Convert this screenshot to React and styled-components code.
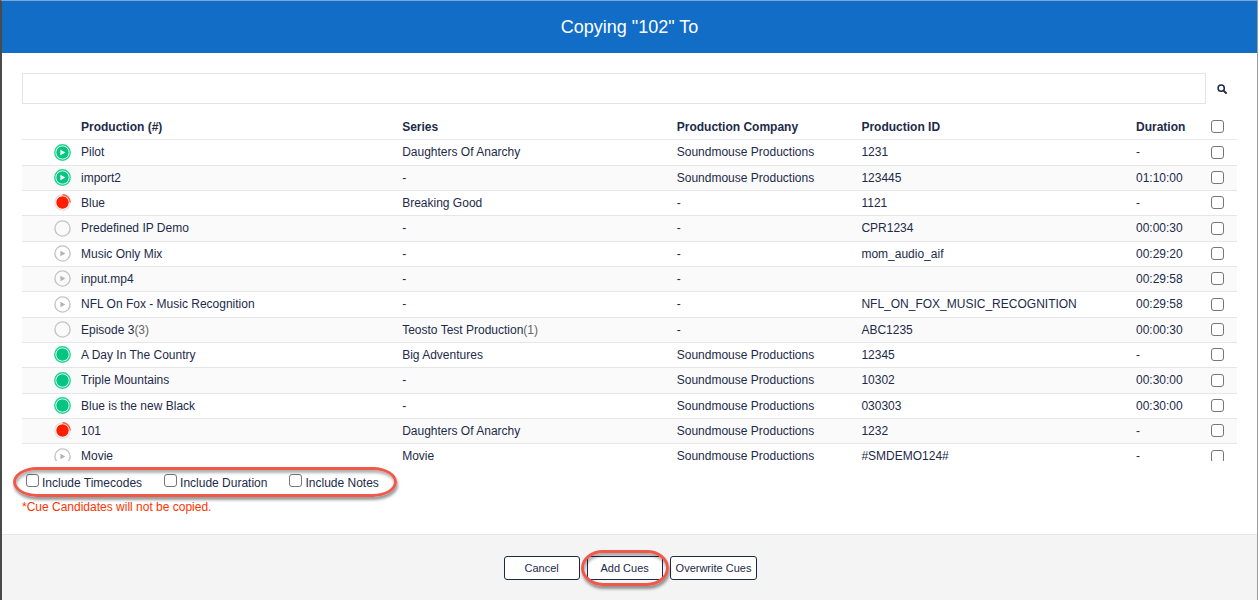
import React from "react";
import styled, { createGlobalStyle, css } from "styled-components";

const navy = "#1d2a4a";

const GlobalStyle = createGlobalStyle`
  *, *::before, *::after { box-sizing: border-box; }
  body {
    margin: 0;
    background: #fff;
    color: ${navy};
    font-family: "Liberation Sans", Arial, Helvetica, sans-serif;
    font-size: 12px;
    line-height: 16px;
  }
`;

const Dialog = styled.main`
  margin-right: 2px;
  border-top: 1px solid #7fa6d3;
  border-left: 2px solid #4a4a4a;
  border-right: 1px solid #a09c9e;
  background: #fff;
`;

const TitleBar = styled.header`
  height: 52px;
  display: flex;
  align-items: center;
  justify-content: center;
  background: #116dc5;
  color: #fff;
`;

const Title = styled.h1`
  margin: 0;
  font-size: 18px;
  line-height: 24px;
  font-weight: 400;
`;

const Body = styled.section`
  padding: 20px 20px 19px;
`;

const SearchRow = styled.form`
  display: flex;
  align-items: center;
  gap: 8px;
`;

const SearchInput = styled.input`
  flex: 1;
  min-width: 0;
  height: 31px;
  padding: 0 8px;
  border: 1px solid #e4e4e4;
  border-radius: 0;
  font: inherit;
  color: inherit;
`;

const SearchButton = styled.button`
  width: 16px;
  height: 16px;
  margin-right: 7px;
  padding: 0;
  display: grid;
  place-items: center;
  border: 0;
  background: none;
  color: ${navy};
`;

const ListViewport = styled.div`
  height: 346px;
  margin-top: 11px;
  overflow: hidden;
`;

const Table = styled.table`
  width: 100%;
  table-layout: fixed;
  border-collapse: collapse;
`;

const Col = styled.col`
  width: ${(p) => p.$width};
`;

const HeadCell = styled.th`
  height: 24px;
  padding: 0;
  border-bottom: 1px solid #e8e8e8;
  text-align: left;
  font-weight: 700;
`;

const Cell = styled.td`
  height: 25px;
  padding: 0;
  border-bottom: 1px solid #e6e6e6;
  white-space: nowrap;
`;

const Row = styled.tr`
  &:nth-child(even) { background: #fafafa; }
  &:nth-child(3n + 1) ${Cell} { height: 26px; }
`;

const StatusIcon = styled.svg`
  display: block;
  margin-left: auto;
  margin-right: 10px;
`;

const Count = styled.span`
  color: #666;
`;

const checkbox = css`
  appearance: none;
  width: 13px;
  height: 13px;
  margin: 0;
  border: 1px solid #767676;
  border-radius: 3px;
  background: #fff;
  &:checked { background: #116dc5; }
`;

const RowCheck = styled.input.attrs({ type: "checkbox" })`
  ${checkbox}
  display: block;
`;

const OptionCheck = styled.input.attrs({ type: "checkbox" })`
  ${checkbox}
  margin-bottom: 4px;
`;

const Options = styled.div`
  position: relative;
  width: max-content;
  display: flex;
  gap: 22px;
  height: 30px;
  margin-top: 6px;
  padding: 7px 0 0 4px;
`;

const Option = styled.label`
  display: flex;
  align-items: center;
  gap: 3px;
  height: 17px;
`;

const Highlight = styled.span`
  position: absolute;
  inset: ${(p) => p.$inset};
  border: 3px solid #f0594a;
  border-radius: ${(p) => p.$radius};
  box-shadow: 1px 3px 3px rgba(0, 0, 0, 0.4), inset 1px 3px 3px rgba(0, 0, 0, 0.3);
  pointer-events: none;
`;

const Warning = styled.p`
  margin: 2px 0 0;
  color: #ff3300;
`;

const Footer = styled.footer`
  height: 66px;
  padding-left: 2px;
  display: flex;
  align-items: center;
  justify-content: center;
  gap: 7px;
  border-top: 1px solid #e6e6e6;
  background: #f4f4f4;
`;

const ButtonSlot = styled.div`
  position: relative;
`;

const Button = styled.button`
  display: block;
  min-width: 76px;
  height: 24px;
  padding: 0 5px;
  border: 1px solid ${navy};
  border-radius: 3px;
  background: #fff;
  color: ${navy};
  font: inherit;
  font-size: 11px;
`;

function Status({ kind }) {
  const done = kind === "done" || kind === "donePlay";
  const play = kind === "play" || kind === "donePlay";
  return (
    <StatusIcon width="17" height="17" viewBox="0 0 17 17" aria-hidden="true">
      {done && (
        <>
          <circle cx="8.5" cy="8.5" r="7.7" fill="#fff" stroke="#1fd596" strokeWidth="1.4" />
          <circle cx="8.5" cy="8.5" r="6.2" fill="#06c581" />
        </>
      )}
      {kind === "alert" && (
        <>
          <circle cx="8.5" cy="8.5" r="7.7" fill="#fff" stroke="#e0e0e0" strokeWidth="1.3" />
          <path d="M8.5 .8A7.7 7.7 0 0 1 16.2 8.5" fill="none" stroke="#ff5a3c" strokeWidth="1.4" />
          <circle cx="8.5" cy="8.5" r="6.2" fill="#ff1e00" />
        </>
      )}
      {(kind === "empty" || kind === "play") && (
        <circle cx="8.5" cy="8.5" r="7.6" fill="none" stroke="#c4c4c4" strokeWidth="1.4" />
      )}
      {play && <path d="M6.4 5.8V11.2L11.4 8.5Z" fill={done ? "#fff" : "#b4b4b4"} />}
    </StatusIcon>
  );
}

const SP = "Soundmouse Productions";
const rows = [
  ["donePlay", "Pilot", "Daughters Of Anarchy", SP, "1231", "-"],
  ["donePlay", "import2", "-", SP, "123445", "01:10:00"],
  ["alert", "Blue", "Breaking Good", "-", "1121", "-"],
  ["empty", "Predefined IP Demo", "-", "-", "CPR1234", "00:00:30"],
  ["play", "Music Only Mix", "-", "-", "mom_audio_aif", "00:29:20"],
  ["play", "input.mp4", "-", "-", "", "00:29:58"],
  ["play", "NFL On Fox - Music Recognition", "-", "-", "NFL_ON_FOX_MUSIC_RECOGNITION", "00:29:58"],
  ["empty", <>Episode 3<Count>(3)</Count></>, <>Teosto Test Production<Count>(1)</Count></>, "-", "ABC1235", "00:00:30"],
  ["done", "A Day In The Country", "Big Adventures", SP, "12345", "-"],
  ["done", "Triple Mountains", "-", SP, "10302", "00:30:00"],
  ["done", "Blue is the new Black", "-", SP, "030303", "00:30:00"],
  ["alert", "101", "Daughters Of Anarchy", SP, "1232", "-"],
  ["play", "Movie", "Movie", SP, "#SMDEMO124#", "-"],
];

export default function App() {
  return (
    <>
      <GlobalStyle />
      <Dialog>
        <TitleBar>
          <Title>Copying "102" To</Title>
        </TitleBar>
        <Body>
          <SearchRow onSubmit={(e) => e.preventDefault()}>
            <SearchInput type="text" aria-label="Search productions" />
            <SearchButton type="submit" aria-label="Search">
              <svg width="10" height="10" viewBox="0 0 10 10" fill="none" stroke="currentColor">
                <circle cx="4.2" cy="4.2" r="3.1" strokeWidth="1.5" />
                <path d="M6.6 6.6L9 9" strokeWidth="1.9" strokeLinecap="round" />
              </svg>
            </SearchButton>
          </SearchRow>
          <ListViewport>
            <Table>
              <colgroup>
                <Col $width="59px" />
                <Col />
                <Col $width="22.6%" />
                <Col $width="15.2%" />
                <Col $width="22.6%" />
                <Col $width="75px" />
                <Col $width="26px" />
              </colgroup>
              <thead>
                <tr>
                  <HeadCell />
                  <HeadCell>Production (#)</HeadCell>
                  <HeadCell>Series</HeadCell>
                  <HeadCell>Production Company</HeadCell>
                  <HeadCell>Production ID</HeadCell>
                  <HeadCell>Duration</HeadCell>
                  <HeadCell>
                    <RowCheck aria-label="Select all productions" />
                  </HeadCell>
                </tr>
              </thead>
              <tbody>
                {rows.map(([kind, name, series, company, id, duration]) => (
                  <Row key={id}>
                    <Cell><Status kind={kind} /></Cell>
                    <Cell>{name}</Cell>
                    <Cell>{series}</Cell>
                    <Cell>{company}</Cell>
                    <Cell>{id}</Cell>
                    <Cell>{duration}</Cell>
                    <Cell><RowCheck aria-label="Select production" /></Cell>
                  </Row>
                ))}
              </tbody>
            </Table>
          </ListViewport>
          <Options>
            <Option><OptionCheck />Include Timecodes</Option>
            <Option><OptionCheck />Include Duration</Option>
            <Option><OptionCheck />Include Notes</Option>
            <Highlight $inset="0 -18px 0 -9px" $radius="24px / 50%" />
          </Options>
          <Warning>*Cue Candidates will not be copied.</Warning>
        </Body>
        <Footer>
          <Button type="button">Cancel</Button>
          <ButtonSlot>
            <Button type="button">Add Cues</Button>
            <Highlight $inset="-6px" $radius="22px / 50%" />
          </ButtonSlot>
          <Button type="button">Overwrite Cues</Button>
        </Footer>
      </Dialog>
    </>
  );
}
